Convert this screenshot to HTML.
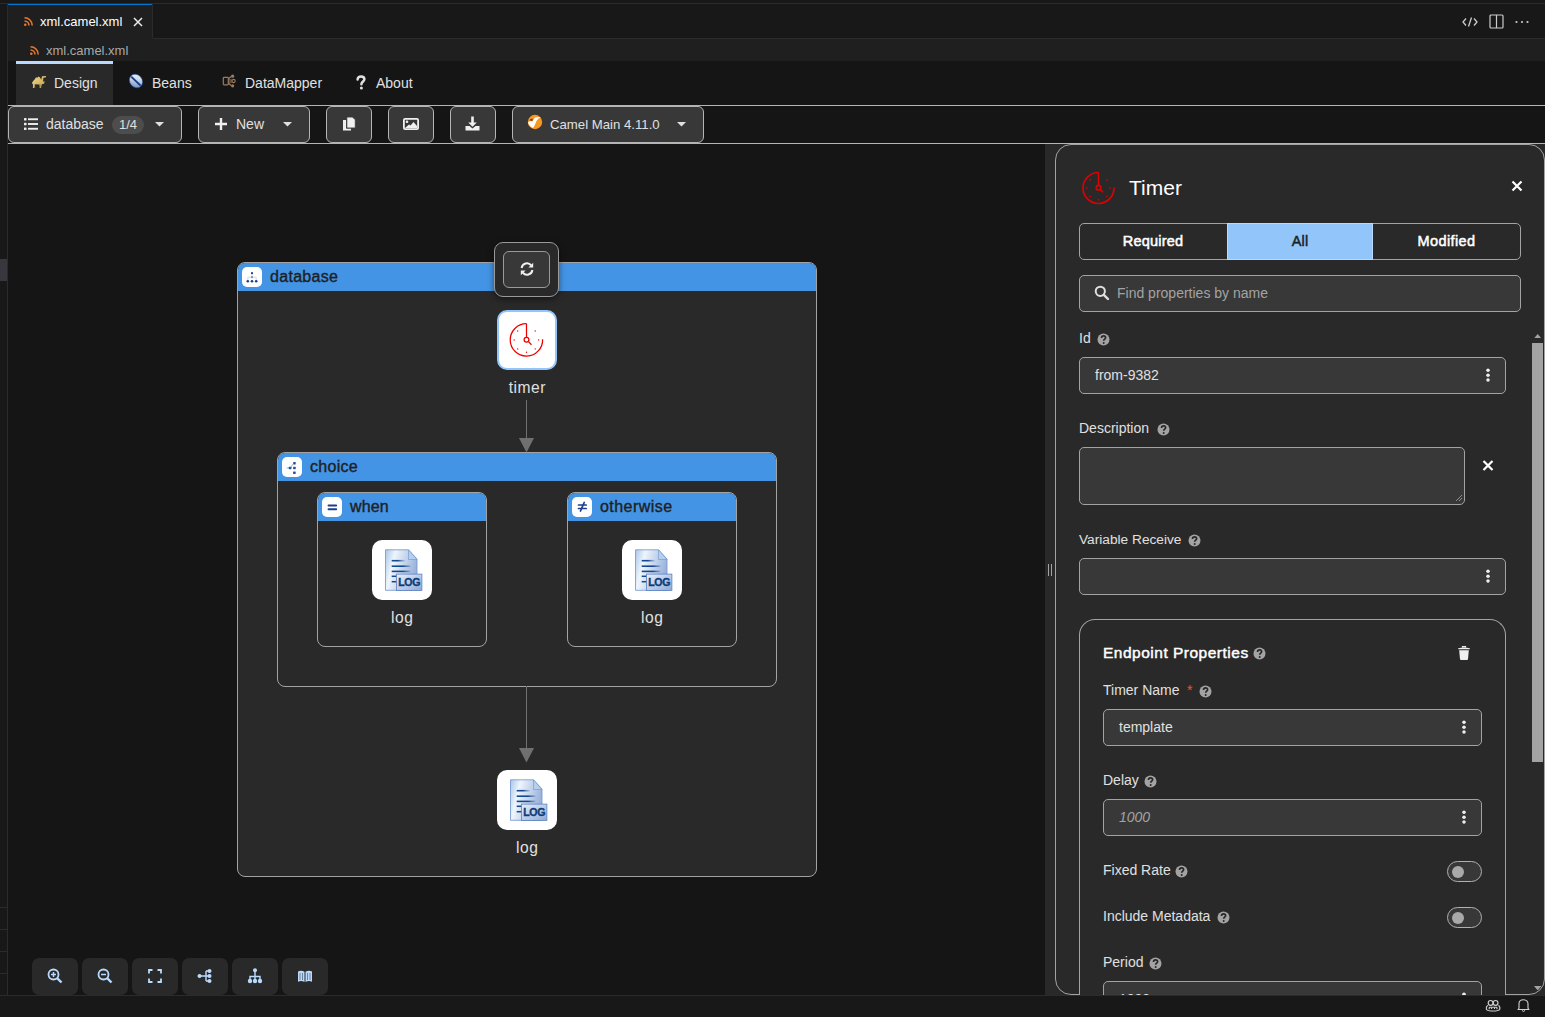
<!DOCTYPE html>
<html><head><meta charset="utf-8"><style>
html,body{margin:0;padding:0;width:1545px;height:1017px;overflow:hidden;background:#181818;font-family:"Liberation Sans", sans-serif;}
body>div,body>svg{position:absolute;}
</style></head><body>
<div style="left:0px;top:0px;width:1545px;height:38px;background:#181818;"></div><div style="left:0px;top:3px;width:1545px;height:1px;background:#2b2b2b;"></div><div style="left:8px;top:4px;width:144px;height:35px;background:#1f1f1f;"></div><div style="left:8px;top:4px;width:144px;height:1px;background:#0078d4;"></div><div style="left:152px;top:4px;width:1px;height:35px;background:#2b2b2b;"></div><div style="left:153px;top:38px;width:1392px;height:1px;background:#2b2b2b;"></div><div style="left:8px;top:39px;width:1537px;height:22px;background:#1f1f1f;"></div><div style="left:8px;top:38px;width:145px;height:1px;background:#1f1f1f;"></div><div style="left:0px;top:4px;width:7px;height:991px;background:#181818;"></div><div style="left:7px;top:4px;width:1px;height:991px;background:#2b2b2b;"></div><div style="left:0px;top:259px;width:7px;height:22px;background:#37373d;"></div><div style="left:0px;top:907px;width:7px;height:1px;background:#2b2b2b;"></div><div style="left:0px;top:929px;width:7px;height:1px;background:#2b2b2b;"></div><div style="left:0px;top:951px;width:7px;height:1px;background:#2b2b2b;"></div><div style="left:0px;top:973px;width:7px;height:1px;background:#2b2b2b;"></div><svg style="left:24px;top:17px;" width="9" height="9" viewBox="0 0 9 9"><circle cx="1.3" cy="7.7" r="1.3" fill="#e37933"/><path d="M0.5 4 A4.5 4.5 0 0 1 5 8.5" stroke="#e37933" stroke-width="1.6" fill="none"/><path d="M0.5 0.8 A7.7 7.7 0 0 1 8.2 8.5" stroke="#e37933" stroke-width="1.6" fill="none"/></svg><div style="top:15.00px;font-size:13px;line-height:13px;color:#ffffff;font-weight:400;font-style:normal;white-space:nowrap;left:40px;">xml.camel.xml</div><svg style="left:133px;top:17px;" width="10" height="10" viewBox="0 0 10 10"><path d="M1 1L9 9M9 1L1 9" stroke="#ececec" stroke-width="1.5"/></svg><svg style="left:30px;top:46px;" width="9" height="9" viewBox="0 0 9 9"><circle cx="1.3" cy="7.7" r="1.3" fill="#e37933"/><path d="M0.5 4 A4.5 4.5 0 0 1 5 8.5" stroke="#e37933" stroke-width="1.6" fill="none"/><path d="M0.5 0.8 A7.7 7.7 0 0 1 8.2 8.5" stroke="#e37933" stroke-width="1.6" fill="none"/></svg><div style="top:44.00px;font-size:13px;line-height:13px;color:#a9a9a9;font-weight:400;font-style:normal;white-space:nowrap;left:46px;">xml.camel.xml</div><svg style="left:1462px;top:17px;" width="16" height="10" viewBox="0 0 16 10"><path d="M4 1.5L1 5L4 8.5M12 1.5L15 5L12 8.5M9.5 0.5L6.5 9.5" stroke="#cccccc" stroke-width="1.3" fill="none"/></svg><svg style="left:1489px;top:14px;" width="15" height="15" viewBox="0 0 15 15"><rect x="1" y="1" width="13" height="13" rx="1" stroke="#cccccc" stroke-width="1.2" fill="none"/><path d="M7.5 1V14" stroke="#cccccc" stroke-width="1.2"/></svg><svg style="left:1515px;top:20px;" width="14" height="4" viewBox="0 0 14 4"><circle cx="1.5" cy="2" r="1.1" fill="#cccccc"/><circle cx="7" cy="2" r="1.1" fill="#cccccc"/><circle cx="12.5" cy="2" r="1.1" fill="#cccccc"/></svg><div style="left:8px;top:61px;width:1537px;height:934px;background:#151515;"></div><div style="left:16px;top:61px;width:97px;height:3px;background:#b9dafc;"></div><div style="left:16px;top:64px;width:97px;height:41px;background:#292929;"></div><div style="top:76.15px;font-size:14px;line-height:14px;color:#e0e0e0;font-weight:400;font-style:normal;white-space:nowrap;left:54px;">Design</div><div style="top:76.15px;font-size:14px;line-height:14px;color:#e0e0e0;font-weight:400;font-style:normal;white-space:nowrap;left:152px;">Beans</div><div style="top:76.15px;font-size:14px;line-height:14px;color:#e0e0e0;font-weight:400;font-style:normal;white-space:nowrap;left:245px;">DataMapper</div><div style="top:76.15px;font-size:14px;line-height:14px;color:#e0e0e0;font-weight:400;font-style:normal;white-space:nowrap;left:376px;">About</div><div style="left:8px;top:105px;width:1537px;height:1px;background:#b4b4b4;"></div><div style="left:8px;top:143px;width:1537px;height:1px;background:#b4b4b4;"></div><svg style="left:28px;top:72px;" width="22" height="20" viewBox="0 0 22 20"><defs><linearGradient id="cg" x1="0" y1="0" x2="1" y2="1"><stop offset="0" stop-color="#f0dc8c"/><stop offset="1" stop-color="#c09a48"/></linearGradient></defs><path d="M3.9 11 L5.2 9 L7 7 L8 5.2 L9.3 5.8 L10.6 4.6 L12 5.5 L13.2 7.8 L14 4.2 L18 3.9 L18 5.3 L15.4 5.8 L15 9.5 L16.8 9.6 L16 11.8 L13.8 12.3 L13 16 L11.6 16 L11.3 12.4 L7.2 12.2 L6.4 16 L4.9 16 L5 12.4 Z" fill="url(#cg)"/><path d="M6.8 12.5 L7.6 15.5 M12 12.5 L11.7 15.8" stroke="#5a4520" stroke-width="0.7"/></svg><svg style="left:128px;top:73px;" width="16" height="16" viewBox="0 0 16 16"><defs><linearGradient id="bg1" x1="0" y1="0" x2="1" y2="1"><stop offset="0" stop-color="#ffffff"/><stop offset="0.45" stop-color="#c5d3e8"/><stop offset="1" stop-color="#5f7fc0"/></linearGradient></defs><ellipse cx="8" cy="8" rx="7.2" ry="6.2" transform="rotate(50 8 8)" fill="url(#bg1)" stroke="#2a4f9a" stroke-width="0.6"/><path d="M3.2 3.6 L12.6 12.6" stroke="#163a85" stroke-width="1.9"/></svg><svg style="left:222px;top:74px;" width="14" height="14" viewBox="0 0 14 14"><rect x="1.3" y="3.3" width="5" height="7.5" rx="0.8" stroke="#9c7b5f" stroke-width="1.2" fill="none"/><path d="M6.3 6 L10 6 M6.3 8 L10 8 M6.5 5 L9 2.5 M6.5 9 L9 11.5" stroke="#9c7b5f" stroke-width="1.1"/><circle cx="10.6" cy="2.2" r="1.6" fill="#9c7b5f"/><circle cx="11.6" cy="7" r="1.6" stroke="#9c7b5f" stroke-width="1.1" fill="none"/><circle cx="10.6" cy="11.8" r="1.6" fill="#9c7b5f"/></svg><svg style="left:355px;top:75px;" width="12" height="15" viewBox="0 0 12 15"><path d="M2.6 4.6C2.6 2.5 4.1 1.4 6 1.4C8 1.4 9.4 2.6 9.4 4.3C9.4 6.4 6.4 6.6 6.4 9.2" stroke="#e0e0e0" stroke-width="2.5" fill="none" stroke-linecap="round"/><circle cx="6.4" cy="13" r="1.5" fill="#e0e0e0"/></svg><div style="left:8px;top:106px;width:174px;height:37px;background:#383838;border:1px solid #b4b4b4;box-sizing:border-box;border-radius:6px;"></div><div style="left:198px;top:106px;width:112px;height:37px;background:#383838;border:1px solid #b4b4b4;box-sizing:border-box;border-radius:6px;"></div><div style="left:326px;top:106px;width:46px;height:37px;background:#383838;border:1px solid #b4b4b4;box-sizing:border-box;border-radius:6px;"></div><div style="left:388px;top:106px;width:46px;height:37px;background:#383838;border:1px solid #b4b4b4;box-sizing:border-box;border-radius:6px;"></div><div style="left:450px;top:106px;width:46px;height:37px;background:#383838;border:1px solid #b4b4b4;box-sizing:border-box;border-radius:6px;"></div><div style="left:512px;top:106px;width:192px;height:37px;background:#383838;border:1px solid #b4b4b4;box-sizing:border-box;border-radius:6px;"></div><svg style="left:24px;top:118px;" width="14" height="12" viewBox="0 0 14 12"><rect x="0" y="0" width="2.5" height="2.5" rx="0.6" fill="#f0f0f0"/><rect x="0" y="4.75" width="2.5" height="2.5" rx="0.6" fill="#f0f0f0"/><rect x="0" y="9.5" width="2.5" height="2.5" rx="0.6" fill="#f0f0f0"/><rect x="4" y="0.3" width="10" height="1.9" fill="#f0f0f0"/><rect x="4" y="5.05" width="10" height="1.9" fill="#f0f0f0"/><rect x="4" y="9.8" width="10" height="1.9" fill="#f0f0f0"/></svg><div style="top:117.15px;font-size:14px;line-height:14px;color:#e0e0e0;font-weight:400;font-style:normal;white-space:nowrap;left:46px;">database</div><div style="left:112px;top:116px;width:32px;height:18px;background:#4d4d4d;border-radius:9px;"></div><div style="top:118.00px;font-size:13px;line-height:13px;color:#e0e0e0;font-weight:400;font-style:normal;white-space:nowrap;left:-372px;width:1000px;text-align:center;">1/4</div><svg style="left:154.5px;top:122.2px;" width="9" height="5" viewBox="0 0 9 5"><path d="M0 0 L9 0 L4.5 4.6 Z" fill="#e0e0e0"/></svg><svg style="left:215px;top:118px;" width="12" height="12" viewBox="0 0 12 12"><path d="M6 0V12M0 6H12" stroke="#f0f0f0" stroke-width="2.4"/></svg><div style="top:117.15px;font-size:14px;line-height:14px;color:#e0e0e0;font-weight:400;font-style:normal;white-space:nowrap;left:236px;">New</div><svg style="left:282.5px;top:122.2px;" width="9" height="5" viewBox="0 0 9 5"><path d="M0 0 L9 0 L4.5 4.6 Z" fill="#e0e0e0"/></svg><svg style="left:342px;top:116px;" width="14" height="15" viewBox="0 0 14 15"><path d="M1 4 H4 V12.5 H9 V14.5 H1 Z" fill="#f0f0f0"/><path d="M4.8 1 H10.5 L13.3 3.8 V12 H4.8 Z" fill="#f0f0f0" stroke="#383838" stroke-width="0.9"/></svg><svg style="left:403px;top:118px;" width="16" height="12" viewBox="0 0 16 12"><rect x="0.9" y="0.9" width="14.2" height="10.2" rx="1.2" stroke="#f0f0f0" stroke-width="1.8" fill="none"/><circle cx="4" cy="3.8" r="1.3" fill="#f0f0f0"/><path d="M2 10 L6 6.5 L7.5 7.5 L10.5 4 L14 8 L14 10 Z" fill="#f0f0f0"/></svg><svg style="left:465px;top:116px;" width="15" height="15" viewBox="0 0 15 15"><path d="M6.2 0.5 H8.8 V6.5 H11.8 L7.5 10.8 L3.2 6.5 H6.2 Z" fill="#f0f0f0"/><path d="M0.5 10 H4.5 L7.5 12.5 L10.5 10 H14.5 V14.5 H0.5 Z" fill="#f0f0f0"/></svg><svg style="left:527px;top:114px;" width="16" height="16" viewBox="0 0 16 16"><circle cx="8" cy="8" r="7.2" fill="#f69923"/><path d="M1 8.5 C2.5 7 4 6.5 5.5 7.5 C6.5 5.5 7.5 3.5 9 3.3 L14 3 C12 4 10.5 5 9.5 7 C8.5 9.5 7.5 12 6 14 C4 13 2 11.5 1 8.5 Z" fill="#ffffff"/><path d="M2.5 6.5 C3.5 4.8 4.8 4.5 5.8 5.2 L5.2 7 C4 6.5 3.3 6.5 2.5 6.5Z" fill="#6b3a05"/></svg><div style="top:117.83px;font-size:13.2px;line-height:13.2px;color:#e0e0e0;font-weight:400;font-style:normal;white-space:nowrap;left:550px;">Camel Main 4.11.0</div><svg style="left:676.5px;top:122.2px;" width="9" height="5" viewBox="0 0 9 5"><path d="M0 0 L9 0 L4.5 4.6 Z" fill="#e0e0e0"/></svg><div style="left:237px;top:262px;width:580px;height:615px;background:#292929;border:1px solid #a3a3a3;box-sizing:border-box;border-radius:8px;"></div><div style="left:238px;top:263px;width:578px;height:28px;background:#4394e5;border-radius:7px 7px 0 0;"></div><div style="left:242px;top:267px;width:20px;height:20px;background:#ffffff;border-radius:5px;"></div><svg style="left:242px;top:267px;" width="20" height="20" viewBox="0 0 20 20"><g fill="#1c3f8a"><circle cx="10" cy="6.2" r="1.1"/><circle cx="10" cy="10.2" r="1.1"/><circle cx="5.8" cy="14.2" r="1.3"/><circle cx="10" cy="14.2" r="1.3"/><circle cx="14.2" cy="14.2" r="1.3"/></g><path d="M10 7V10.2M5.8 13V10.2H14.2V13" stroke="#c7d0e0" stroke-width="0.8" fill="none"/></svg><div style="top:268.66px;font-size:16px;line-height:16px;color:#1f1f1f;font-weight:400;font-style:normal;white-space:nowrap;letter-spacing:0.3px;left:270px;-webkit-text-stroke:0.4px #1f1f1f;">database</div><div style="left:277px;top:452px;width:500px;height:235px;background:#292929;border:1px solid #a3a3a3;box-sizing:border-box;border-radius:8px;"></div><div style="left:278px;top:453px;width:498px;height:28px;background:#4394e5;border-radius:7px 7px 0 0;"></div><div style="left:282px;top:457px;width:20px;height:20px;background:#ffffff;border-radius:5px;"></div><svg style="left:282px;top:457px;" width="20" height="20" viewBox="0 0 20 20"><g fill="#2a4f93"><rect x="11.1" y="5" width="2.6" height="2.4" rx="0.4"/><rect x="11.1" y="9.8" width="2.6" height="2.4" rx="0.4"/><rect x="11.1" y="14.6" width="2.6" height="2.4" rx="0.4"/><rect x="6.8" y="9.8" width="2.6" height="2.4" rx="0.4"/></g><path d="M4.5 11H7M8.5 10.5L11.5 6.5" stroke="#7d8fb5" stroke-width="0.7"/></svg><div style="top:458.66px;font-size:16px;line-height:16px;color:#1f1f1f;font-weight:400;font-style:normal;white-space:nowrap;letter-spacing:0.28px;left:310px;-webkit-text-stroke:0.4px #1f1f1f;">choice</div><div style="left:317px;top:492px;width:170px;height:155px;background:#292929;border:1px solid #a3a3a3;box-sizing:border-box;border-radius:8px;"></div><div style="left:318px;top:493px;width:168px;height:28px;background:#4394e5;border-radius:7px 7px 0 0;"></div><div style="left:322px;top:497px;width:20px;height:20px;background:#ffffff;border-radius:5px;"></div><svg style="left:322px;top:497px;" width="20" height="20" viewBox="0 0 20 20"><path d="M6.5 8.5H14.2M6.5 12.2H14.2" stroke="#1c3f8a" stroke-width="1.9" stroke-linecap="round"/></svg><div style="top:498.66px;font-size:16px;line-height:16px;color:#1f1f1f;font-weight:400;font-style:normal;white-space:nowrap;letter-spacing:0.1px;left:350px;-webkit-text-stroke:0.4px #1f1f1f;">when</div><div style="left:567px;top:492px;width:170px;height:155px;background:#292929;border:1px solid #a3a3a3;box-sizing:border-box;border-radius:8px;"></div><div style="left:568px;top:493px;width:168px;height:28px;background:#4394e5;border-radius:7px 7px 0 0;"></div><div style="left:572px;top:497px;width:20px;height:20px;background:#ffffff;border-radius:5px;"></div><svg style="left:572px;top:497px;" width="20" height="20" viewBox="0 0 20 20"><path d="M6.5 8H14.2M6.5 11.5H14.2M12.2 5.5L8.5 14" stroke="#1c3f8a" stroke-width="1.7" stroke-linecap="round"/></svg><div style="top:498.66px;font-size:16px;line-height:16px;color:#1f1f1f;font-weight:400;font-style:normal;white-space:nowrap;letter-spacing:0.45px;left:600px;-webkit-text-stroke:0.4px #1f1f1f;">otherwise</div><div style="left:497px;top:310px;width:60px;height:60px;background:#ffffff;border:2px solid #92c5f9;box-sizing:border-box;border-radius:10px;"></div><svg style="left:497px;top:310px;" width="60" height="60" viewBox="0 0 60 60"><g stroke="#ee0000" fill="none" stroke-width="1.25"><path d="M29.5 13.7 A16.2 16.2 0 1 0 45.6 29.2"/><path d="M29.5 13.7V27.3"/><circle cx="29.5" cy="29.7" r="2.4"/><path d="M31.2 31.4L34.5 34.8"/></g><g fill="#ee0000"><circle cx="20.7" cy="21" r="0.7"/><circle cx="38.2" cy="21" r="0.7"/><circle cx="17.2" cy="29.9" r="0.7"/><circle cx="41.6" cy="29.9" r="0.7"/><circle cx="20.7" cy="38.9" r="0.7"/><circle cx="38.2" cy="38.9" r="0.7"/><circle cx="29.5" cy="42.2" r="0.7"/></g></svg><div style="top:379.59px;font-size:15.6px;line-height:15.6px;color:#e0e0e0;font-weight:400;font-style:normal;white-space:nowrap;letter-spacing:0.5px;left:27.25px;width:1000px;text-align:center;">timer</div><div style="left:372px;top:540px;width:60px;height:60px;background:#ffffff;border-radius:10px;"></div><svg style="left:372px;top:540px;" width="60" height="60" viewBox="0 0 60 60"><defs><linearGradient id="lg1" x1="0" y1="0" x2="1" y2="0.3"><stop offset="0" stop-color="#a9c6ea"/><stop offset="0.3" stop-color="#eef5fc"/><stop offset="1" stop-color="#9bb4dc"/></linearGradient><linearGradient id="lg2" x1="0" y1="0" x2="1" y2="1"><stop offset="0" stop-color="#e8f1fb"/><stop offset="1" stop-color="#8fa9d6"/></linearGradient></defs><path d="M13.5 9.8H36.5L45 19V50.3H13.5Z" fill="url(#lg1)" stroke="#6f93cf" stroke-width="0.8"/><path d="M36.5 9.8V19.5H45Z" fill="#b7cfee" stroke="#6f93cf" stroke-width="0.6"/><defs><linearGradient id="lf" gradientUnits="userSpaceOnUse" x1="19" y1="0" x2="39" y2="0"><stop offset="0" stop-color="#15488f"/><stop offset="0.6" stop-color="#15488f"/><stop offset="1" stop-color="#15488f" stop-opacity="0.15"/></linearGradient></defs><linearGradient id="lf1" gradientUnits="userSpaceOnUse" x1="19" y1="0" x2="33" y2="0"><stop offset="0" stop-color="#15488f"/><stop offset="0.5" stop-color="#15488f"/><stop offset="1" stop-color="#15488f" stop-opacity="0.1"/></linearGradient><path d="M19.7 20.7H33" stroke="url(#lf1)" stroke-width="1.6"/><g stroke="url(#lf)" stroke-width="1.6"><path d="M19.7 26.2H38.5"/><path d="M19.7 31.4H38.5"/></g><g stroke="#15488f" stroke-width="1.5"><path d="M19.7 36.3H25"/><path d="M19.7 41.7H25"/></g><rect x="24.4" y="34.1" width="25.5" height="16.4" fill="url(#lg2)" stroke="#5b80c2" stroke-width="0.8"/><text x="37.2" y="46.2" text-anchor="middle" font-family="Liberation Sans" font-weight="700" font-size="10.6" fill="#0d3c7a" stroke="#0d3c7a" stroke-width="0.35" letter-spacing="-0.3">LOG</text></svg><div style="top:609.59px;font-size:15.6px;line-height:15.6px;color:#e0e0e0;font-weight:400;font-style:normal;white-space:nowrap;letter-spacing:0.5px;left:-97.75px;width:1000px;text-align:center;">log</div><div style="left:622px;top:540px;width:60px;height:60px;background:#ffffff;border-radius:10px;"></div><svg style="left:622px;top:540px;" width="60" height="60" viewBox="0 0 60 60"><defs><linearGradient id="lg1" x1="0" y1="0" x2="1" y2="0.3"><stop offset="0" stop-color="#a9c6ea"/><stop offset="0.3" stop-color="#eef5fc"/><stop offset="1" stop-color="#9bb4dc"/></linearGradient><linearGradient id="lg2" x1="0" y1="0" x2="1" y2="1"><stop offset="0" stop-color="#e8f1fb"/><stop offset="1" stop-color="#8fa9d6"/></linearGradient></defs><path d="M13.5 9.8H36.5L45 19V50.3H13.5Z" fill="url(#lg1)" stroke="#6f93cf" stroke-width="0.8"/><path d="M36.5 9.8V19.5H45Z" fill="#b7cfee" stroke="#6f93cf" stroke-width="0.6"/><defs><linearGradient id="lf" gradientUnits="userSpaceOnUse" x1="19" y1="0" x2="39" y2="0"><stop offset="0" stop-color="#15488f"/><stop offset="0.6" stop-color="#15488f"/><stop offset="1" stop-color="#15488f" stop-opacity="0.15"/></linearGradient></defs><linearGradient id="lf1" gradientUnits="userSpaceOnUse" x1="19" y1="0" x2="33" y2="0"><stop offset="0" stop-color="#15488f"/><stop offset="0.5" stop-color="#15488f"/><stop offset="1" stop-color="#15488f" stop-opacity="0.1"/></linearGradient><path d="M19.7 20.7H33" stroke="url(#lf1)" stroke-width="1.6"/><g stroke="url(#lf)" stroke-width="1.6"><path d="M19.7 26.2H38.5"/><path d="M19.7 31.4H38.5"/></g><g stroke="#15488f" stroke-width="1.5"><path d="M19.7 36.3H25"/><path d="M19.7 41.7H25"/></g><rect x="24.4" y="34.1" width="25.5" height="16.4" fill="url(#lg2)" stroke="#5b80c2" stroke-width="0.8"/><text x="37.2" y="46.2" text-anchor="middle" font-family="Liberation Sans" font-weight="700" font-size="10.6" fill="#0d3c7a" stroke="#0d3c7a" stroke-width="0.35" letter-spacing="-0.3">LOG</text></svg><div style="top:609.59px;font-size:15.6px;line-height:15.6px;color:#e0e0e0;font-weight:400;font-style:normal;white-space:nowrap;letter-spacing:0.5px;left:152.25px;width:1000px;text-align:center;">log</div><div style="left:497px;top:770px;width:60px;height:60px;background:#ffffff;border-radius:10px;"></div><svg style="left:497px;top:770px;" width="60" height="60" viewBox="0 0 60 60"><defs><linearGradient id="lg1" x1="0" y1="0" x2="1" y2="0.3"><stop offset="0" stop-color="#a9c6ea"/><stop offset="0.3" stop-color="#eef5fc"/><stop offset="1" stop-color="#9bb4dc"/></linearGradient><linearGradient id="lg2" x1="0" y1="0" x2="1" y2="1"><stop offset="0" stop-color="#e8f1fb"/><stop offset="1" stop-color="#8fa9d6"/></linearGradient></defs><path d="M13.5 9.8H36.5L45 19V50.3H13.5Z" fill="url(#lg1)" stroke="#6f93cf" stroke-width="0.8"/><path d="M36.5 9.8V19.5H45Z" fill="#b7cfee" stroke="#6f93cf" stroke-width="0.6"/><defs><linearGradient id="lf" gradientUnits="userSpaceOnUse" x1="19" y1="0" x2="39" y2="0"><stop offset="0" stop-color="#15488f"/><stop offset="0.6" stop-color="#15488f"/><stop offset="1" stop-color="#15488f" stop-opacity="0.15"/></linearGradient></defs><linearGradient id="lf1" gradientUnits="userSpaceOnUse" x1="19" y1="0" x2="33" y2="0"><stop offset="0" stop-color="#15488f"/><stop offset="0.5" stop-color="#15488f"/><stop offset="1" stop-color="#15488f" stop-opacity="0.1"/></linearGradient><path d="M19.7 20.7H33" stroke="url(#lf1)" stroke-width="1.6"/><g stroke="url(#lf)" stroke-width="1.6"><path d="M19.7 26.2H38.5"/><path d="M19.7 31.4H38.5"/></g><g stroke="#15488f" stroke-width="1.5"><path d="M19.7 36.3H25"/><path d="M19.7 41.7H25"/></g><rect x="24.4" y="34.1" width="25.5" height="16.4" fill="url(#lg2)" stroke="#5b80c2" stroke-width="0.8"/><text x="37.2" y="46.2" text-anchor="middle" font-family="Liberation Sans" font-weight="700" font-size="10.6" fill="#0d3c7a" stroke="#0d3c7a" stroke-width="0.35" letter-spacing="-0.3">LOG</text></svg><div style="top:839.59px;font-size:15.6px;line-height:15.6px;color:#e0e0e0;font-weight:400;font-style:normal;white-space:nowrap;letter-spacing:0.5px;left:27.25px;width:1000px;text-align:center;">log</div><div style="left:526px;top:400px;width:1px;height:39px;background:#707070;"></div><svg style="left:519px;top:437.5px;" width="15" height="15" viewBox="0 0 15 15"><path d="M0 0H15L7.5 14.5Z" fill="#707070"/></svg><div style="left:526px;top:686px;width:1px;height:63px;background:#707070;"></div><svg style="left:519px;top:747.5px;" width="15" height="15" viewBox="0 0 15 15"><path d="M0 0H15L7.5 14.5Z" fill="#707070"/></svg><div style="left:494px;top:242px;width:65px;height:55px;background:#292929;border:1px solid #9a9a9a;box-sizing:border-box;border-radius:9px;box-shadow:0 2px 6px rgba(0,0,0,0.5);"></div><div style="left:503px;top:251px;width:47px;height:37px;background:#383838;border:1px solid #9a9a9a;box-sizing:border-box;border-radius:6px;"></div><svg style="left:519.5px;top:262px;" width="14" height="14" viewBox="0 0 14 14"><path d="M1.6 6A5.4 5.4 0 0 1 11.2 3.4" stroke="#f0f0f0" stroke-width="2" fill="none"/><path d="M13.2 0.8V5.6H8.4Z" fill="#f0f0f0"/><path d="M12.4 8A5.4 5.4 0 0 1 2.8 10.6" stroke="#f0f0f0" stroke-width="2" fill="none"/><path d="M0.8 13.2V8.4H5.6Z" fill="#f0f0f0"/></svg><div style="left:32px;top:958px;width:46px;height:37px;background:#292929;border-radius:7px;"></div><div style="left:82px;top:958px;width:46px;height:37px;background:#292929;border-radius:7px;"></div><div style="left:132px;top:958px;width:46px;height:37px;background:#292929;border-radius:7px;"></div><div style="left:182px;top:958px;width:46px;height:37px;background:#292929;border-radius:7px;"></div><div style="left:232px;top:958px;width:46px;height:37px;background:#292929;border-radius:7px;"></div><div style="left:282px;top:958px;width:46px;height:37px;background:#292929;border-radius:7px;"></div><svg style="left:47px;top:968px;" width="16" height="16" viewBox="0 0 16 16"><circle cx="6.5" cy="6.5" r="5" stroke="#b9dafc" stroke-width="1.8" fill="none"/><path d="M10 10L14.5 14.5" stroke="#b9dafc" stroke-width="2.4"/><path d="M6.5 4V9M4 6.5H9" stroke="#b9dafc" stroke-width="1.5"/></svg><svg style="left:97px;top:968px;" width="16" height="16" viewBox="0 0 16 16"><circle cx="6.5" cy="6.5" r="5" stroke="#b9dafc" stroke-width="1.8" fill="none"/><path d="M10 10L14.5 14.5" stroke="#b9dafc" stroke-width="2.4"/><path d="M4 6.5H9" stroke="#b9dafc" stroke-width="1.5"/></svg><svg style="left:148px;top:969px;" width="14" height="14" viewBox="0 0 14 14"><path d="M1 4.5V1H4.5M9.5 1H13V4.5M13 9.5V13H9.5M4.5 13H1V9.5" stroke="#b9dafc" stroke-width="1.8" fill="none"/></svg><svg style="left:197px;top:968px;" width="16" height="16" viewBox="0 0 16 16"><circle cx="2.5" cy="8" r="2" fill="#b9dafc"/><circle cx="12.5" cy="3" r="2" fill="#b9dafc"/><circle cx="12.5" cy="8" r="2" fill="#b9dafc"/><circle cx="12.5" cy="13" r="2" fill="#b9dafc"/><path d="M2.5 8H12.5M9 3V13M9 3H12M9 13H12" stroke="#b9dafc" stroke-width="1.4" fill="none"/></svg><svg style="left:247px;top:968px;" width="16" height="16" viewBox="0 0 16 16"><circle cx="8" cy="2.2" r="2" fill="#b9dafc"/><circle cx="3" cy="13" r="2.2" fill="#b9dafc"/><circle cx="8" cy="13" r="2.2" fill="#b9dafc"/><circle cx="13" cy="13" r="2.2" fill="#b9dafc"/><path d="M8 2.2V13M3 13V8.5H13V13" stroke="#b9dafc" stroke-width="1.4" fill="none"/></svg><svg style="left:297px;top:969px;" width="16" height="14" viewBox="0 0 16 14"><path d="M1 2.5C3 1.5 5.5 1.5 7.5 2.8V13C5.5 11.8 3 11.8 1 12.8Z M8.5 2.8C10.5 1.5 13 1.5 15 2.5V12.8C13 11.8 10.5 11.8 8.5 13Z" fill="#b9dafc"/><path d="M3 4V11M5.5 4V11M10.5 4V11M13 4V11" stroke="#292929" stroke-width="0.5"/></svg><div style="left:1045px;top:144px;width:500px;height:851px;background:#292929;"></div><div style="left:1048px;top:564px;width:1px;height:12px;background:#a3a3a3;"></div><div style="left:1051px;top:564px;width:1px;height:12px;background:#a3a3a3;"></div><div style="left:1055px;top:144px;width:490px;height:851px;border:1px solid #a3a3a3;border-radius:16px;box-sizing:border-box;background:#292929;"></div><svg style="left:1081px;top:170px;" width="36" height="36" viewBox="0 0 36 36"><g stroke="#e00000" fill="none" stroke-width="1.6"><path d="M17.5 2.5 A15.5 15.5 0 1 0 33 17.5"/><path d="M17.5 2.5V15.3"/><circle cx="17.5" cy="17.7" r="2.3"/><path d="M19.2 19.4L22 22.2"/></g><g fill="#e00000"><circle cx="9.2" cy="9.9" r="0.8"/><circle cx="25.8" cy="9.9" r="0.8"/><circle cx="5.8" cy="18" r="0.8"/><circle cx="29.2" cy="18" r="0.8"/><circle cx="9.2" cy="26.5" r="0.8"/><circle cx="25.8" cy="26.5" r="0.8"/><circle cx="17.5" cy="29.8" r="0.8"/></g></svg><div style="top:177.22px;font-size:21px;line-height:21px;color:#ffffff;font-weight:400;font-style:normal;white-space:nowrap;left:1129px;">Timer</div><svg style="left:1511px;top:180px;" width="12" height="12" viewBox="0 0 12 12"><path d="M1.5 1.5L10.5 10.5M10.5 1.5L1.5 10.5" stroke="#ffffff" stroke-width="2.2"/></svg><div style="left:1079px;top:223px;width:442px;height:37px;border:1px solid #a3a3a3;box-sizing:border-box;border-radius:5px;"></div><div style="left:1227px;top:223px;width:146px;height:37px;background:#92c5f9;border:1px solid #b9dafc;box-sizing:border-box;"></div><div style="top:233.73px;font-size:14.5px;line-height:14.5px;color:#ffffff;font-weight:400;font-style:normal;white-space:nowrap;letter-spacing:0.2px;left:653px;width:1000px;text-align:center;-webkit-text-stroke:0.5px #ffffff;">Required</div><div style="top:233.73px;font-size:14.5px;line-height:14.5px;color:#1f1f1f;font-weight:400;font-style:normal;white-space:nowrap;letter-spacing:0.2px;left:800px;width:1000px;text-align:center;-webkit-text-stroke:0.5px #1f1f1f;">All</div><div style="top:233.73px;font-size:14.5px;line-height:14.5px;color:#ffffff;font-weight:400;font-style:normal;white-space:nowrap;letter-spacing:0.4px;left:946.5px;width:1000px;text-align:center;-webkit-text-stroke:0.5px #ffffff;">Modified</div><div style="left:1079px;top:275px;width:442px;height:37px;background:#383838;border:1px solid #a3a3a3;box-sizing:border-box;border-radius:5px;"></div><svg style="left:1094px;top:285px;" width="16" height="16" viewBox="0 0 16 16"><circle cx="6.3" cy="6.3" r="4.6" stroke="#e0e0e0" stroke-width="2" fill="none"/><path d="M9.8 9.8L14 14" stroke="#e0e0e0" stroke-width="2.4" stroke-linecap="round"/></svg><div style="top:286.15px;font-size:14px;line-height:14px;color:#a3a3a3;font-weight:400;font-style:normal;white-space:nowrap;left:1117px;">Find properties by name</div><div style="top:330.65px;font-size:14px;line-height:14px;color:#e0e0e0;font-weight:400;font-style:normal;white-space:nowrap;left:1079px;">Id</div><svg style="left:1097px;top:332.5px;" width="13" height="13" viewBox="0 0 13 13"><circle cx="6.5" cy="6.5" r="6" fill="#a3a3a3"/><path d="M4.5 5C4.5 3.6 5.4 2.9 6.6 2.9C7.8 2.9 8.6 3.6 8.6 4.7C8.6 6 6.7 6.2 6.7 7.7" stroke="#292929" stroke-width="1.7" fill="none"/><circle cx="6.7" cy="9.9" r="1" fill="#292929"/></svg><div style="left:1079px;top:357px;width:427px;height:37px;background:#383838;border:1px solid #a3a3a3;box-sizing:border-box;border-radius:5px;"></div><div style="top:367.65px;font-size:14px;line-height:14px;color:#e0e0e0;font-weight:400;font-style:normal;white-space:nowrap;left:1095px;">from-9382</div><svg style="left:1486px;top:368px;" width="4" height="15" viewBox="0 0 4 15"><circle cx="2" cy="2.3" r="1.75" fill="#f0f0f0"/><circle cx="2" cy="7.2" r="1.75" fill="#f0f0f0"/><circle cx="2" cy="12.1" r="1.75" fill="#f0f0f0"/></svg><div style="top:420.65px;font-size:14px;line-height:14px;color:#e0e0e0;font-weight:400;font-style:normal;white-space:nowrap;left:1079px;">Description</div><svg style="left:1157px;top:422.5px;" width="13" height="13" viewBox="0 0 13 13"><circle cx="6.5" cy="6.5" r="6" fill="#a3a3a3"/><path d="M4.5 5C4.5 3.6 5.4 2.9 6.6 2.9C7.8 2.9 8.6 3.6 8.6 4.7C8.6 6 6.7 6.2 6.7 7.7" stroke="#292929" stroke-width="1.7" fill="none"/><circle cx="6.7" cy="9.9" r="1" fill="#292929"/></svg><div style="left:1079px;top:447px;width:386px;height:58px;background:#383838;border:1px solid #a3a3a3;box-sizing:border-box;border-radius:5px;"></div><svg style="left:1455px;top:494px;" width="8" height="8" viewBox="0 0 8 8"><path d="M7 1L1 7M7 4L4 7" stroke="#a3a3a3" stroke-width="0.8"/></svg><svg style="left:1482px;top:460px;" width="12" height="11" viewBox="0 0 12 11"><path d="M1.5 1L10.5 10M10.5 1L1.5 10" stroke="#ffffff" stroke-width="2.2"/></svg><div style="top:533.40px;font-size:13.7px;line-height:13.7px;color:#e0e0e0;font-weight:400;font-style:normal;white-space:nowrap;left:1079px;">Variable Receive</div><svg style="left:1188px;top:533.5px;" width="13" height="13" viewBox="0 0 13 13"><circle cx="6.5" cy="6.5" r="6" fill="#a3a3a3"/><path d="M4.5 5C4.5 3.6 5.4 2.9 6.6 2.9C7.8 2.9 8.6 3.6 8.6 4.7C8.6 6 6.7 6.2 6.7 7.7" stroke="#292929" stroke-width="1.7" fill="none"/><circle cx="6.7" cy="9.9" r="1" fill="#292929"/></svg><div style="left:1079px;top:558px;width:427px;height:37px;background:#383838;border:1px solid #a3a3a3;box-sizing:border-box;border-radius:5px;"></div><svg style="left:1486px;top:569px;" width="4" height="15" viewBox="0 0 4 15"><circle cx="2" cy="2.3" r="1.75" fill="#f0f0f0"/><circle cx="2" cy="7.2" r="1.75" fill="#f0f0f0"/><circle cx="2" cy="12.1" r="1.75" fill="#f0f0f0"/></svg><div style="left:1079px;top:619px;width:427px;height:376px;border:1px solid #a3a3a3;border-bottom:none;border-radius:16px 16px 0 0;box-sizing:border-box;background:#292929;"></div><div style="top:645.18px;font-size:15.5px;line-height:15.5px;color:#ffffff;font-weight:400;font-style:normal;white-space:nowrap;letter-spacing:0.5px;left:1103px;-webkit-text-stroke:0.45px #ffffff;">Endpoint Properties</div><svg style="left:1253px;top:646.5px;" width="13" height="13" viewBox="0 0 13 13"><circle cx="6.5" cy="6.5" r="6" fill="#a3a3a3"/><path d="M4.5 5C4.5 3.6 5.4 2.9 6.6 2.9C7.8 2.9 8.6 3.6 8.6 4.7C8.6 6 6.7 6.2 6.7 7.7" stroke="#292929" stroke-width="1.7" fill="none"/><circle cx="6.7" cy="9.9" r="1" fill="#292929"/></svg><svg style="left:1457px;top:645px;" width="14" height="16" viewBox="0 0 14 16"><path d="M1.2 3.2Q7 1.8 12.8 3.2V4.2H1.2Z" fill="#f0f0f0"/><path d="M5.5 2.5V1.6H8.5V2.5" stroke="#f0f0f0" stroke-width="1.2" fill="none"/><path d="M2.2 5.2H11.8L11 14.2Q10.8 15 10 15H4Q3.2 15 3 14.2Z" fill="#f0f0f0"/></svg><div style="top:683.15px;font-size:14px;line-height:14px;color:#e0e0e0;font-weight:400;font-style:normal;white-space:nowrap;left:1103px;">Timer Name</div><div style="top:683.15px;font-size:14px;line-height:14px;color:#f0561d;font-weight:400;font-style:normal;white-space:nowrap;left:1187px;">*</div><svg style="left:1199px;top:684.5px;" width="13" height="13" viewBox="0 0 13 13"><circle cx="6.5" cy="6.5" r="6" fill="#a3a3a3"/><path d="M4.5 5C4.5 3.6 5.4 2.9 6.6 2.9C7.8 2.9 8.6 3.6 8.6 4.7C8.6 6 6.7 6.2 6.7 7.7" stroke="#292929" stroke-width="1.7" fill="none"/><circle cx="6.7" cy="9.9" r="1" fill="#292929"/></svg><div style="left:1103px;top:709px;width:379px;height:37px;background:#383838;border:1px solid #a3a3a3;box-sizing:border-box;border-radius:5px;"></div><div style="top:720.15px;font-size:14px;line-height:14px;color:#e0e0e0;font-weight:400;font-style:normal;white-space:nowrap;left:1119px;">template</div><svg style="left:1462px;top:720px;" width="4" height="15" viewBox="0 0 4 15"><circle cx="2" cy="2.3" r="1.75" fill="#f0f0f0"/><circle cx="2" cy="7.2" r="1.75" fill="#f0f0f0"/><circle cx="2" cy="12.1" r="1.75" fill="#f0f0f0"/></svg><div style="top:773.15px;font-size:14px;line-height:14px;color:#e0e0e0;font-weight:400;font-style:normal;white-space:nowrap;left:1103px;">Delay</div><svg style="left:1144px;top:774.5px;" width="13" height="13" viewBox="0 0 13 13"><circle cx="6.5" cy="6.5" r="6" fill="#a3a3a3"/><path d="M4.5 5C4.5 3.6 5.4 2.9 6.6 2.9C7.8 2.9 8.6 3.6 8.6 4.7C8.6 6 6.7 6.2 6.7 7.7" stroke="#292929" stroke-width="1.7" fill="none"/><circle cx="6.7" cy="9.9" r="1" fill="#292929"/></svg><div style="left:1103px;top:799px;width:379px;height:37px;background:#383838;border:1px solid #a3a3a3;box-sizing:border-box;border-radius:5px;"></div><div style="top:810.15px;font-size:14px;line-height:14px;color:#a3a3a3;font-weight:400;font-style:italic;white-space:nowrap;left:1119px;">1000</div><svg style="left:1462px;top:810px;" width="4" height="15" viewBox="0 0 4 15"><circle cx="2" cy="2.3" r="1.75" fill="#f0f0f0"/><circle cx="2" cy="7.2" r="1.75" fill="#f0f0f0"/><circle cx="2" cy="12.1" r="1.75" fill="#f0f0f0"/></svg><div style="top:863.15px;font-size:14px;line-height:14px;color:#e0e0e0;font-weight:400;font-style:normal;white-space:nowrap;left:1103px;">Fixed Rate</div><svg style="left:1175px;top:864.5px;" width="13" height="13" viewBox="0 0 13 13"><circle cx="6.5" cy="6.5" r="6" fill="#a3a3a3"/><path d="M4.5 5C4.5 3.6 5.4 2.9 6.6 2.9C7.8 2.9 8.6 3.6 8.6 4.7C8.6 6 6.7 6.2 6.7 7.7" stroke="#292929" stroke-width="1.7" fill="none"/><circle cx="6.7" cy="9.9" r="1" fill="#292929"/></svg><div style="left:1447px;top:861px;width:35px;height:21px;background:#383838;border:1px solid #b0b0b0;box-sizing:border-box;border-radius:11px;"></div><div style="left:1452px;top:865.5px;width:12px;height:12px;background:#a9a9a9;border-radius:50%;"></div><div style="top:909.15px;font-size:14px;line-height:14px;color:#e0e0e0;font-weight:400;font-style:normal;white-space:nowrap;left:1103px;">Include Metadata</div><svg style="left:1217px;top:910.5px;" width="13" height="13" viewBox="0 0 13 13"><circle cx="6.5" cy="6.5" r="6" fill="#a3a3a3"/><path d="M4.5 5C4.5 3.6 5.4 2.9 6.6 2.9C7.8 2.9 8.6 3.6 8.6 4.7C8.6 6 6.7 6.2 6.7 7.7" stroke="#292929" stroke-width="1.7" fill="none"/><circle cx="6.7" cy="9.9" r="1" fill="#292929"/></svg><div style="left:1447px;top:907px;width:35px;height:21px;background:#383838;border:1px solid #b0b0b0;box-sizing:border-box;border-radius:11px;"></div><div style="left:1452px;top:911.5px;width:12px;height:12px;background:#a9a9a9;border-radius:50%;"></div><div style="top:955.15px;font-size:14px;line-height:14px;color:#e0e0e0;font-weight:400;font-style:normal;white-space:nowrap;left:1103px;">Period</div><svg style="left:1149px;top:956.5px;" width="13" height="13" viewBox="0 0 13 13"><circle cx="6.5" cy="6.5" r="6" fill="#a3a3a3"/><path d="M4.5 5C4.5 3.6 5.4 2.9 6.6 2.9C7.8 2.9 8.6 3.6 8.6 4.7C8.6 6 6.7 6.2 6.7 7.7" stroke="#292929" stroke-width="1.7" fill="none"/><circle cx="6.7" cy="9.9" r="1" fill="#292929"/></svg><div style="left:1103px;top:981px;width:379px;height:37px;background:#383838;border:1px solid #a3a3a3;box-sizing:border-box;border-radius:5px;"></div><div style="top:992.35px;font-size:14px;line-height:14px;color:#e0e0e0;font-weight:400;font-style:normal;white-space:nowrap;left:1119px;">1000</div><svg style="left:1462px;top:992px;" width="4" height="15" viewBox="0 0 4 15"><circle cx="2" cy="2.3" r="1.75" fill="#f0f0f0"/><circle cx="2" cy="7.2" r="1.75" fill="#f0f0f0"/><circle cx="2" cy="12.1" r="1.75" fill="#f0f0f0"/></svg><div style="left:1532px;top:343px;width:11px;height:419px;background:#a3a3a3;"></div><svg style="left:1533.8px;top:333.8px;" width="7.4" height="4.4" viewBox="0 0 7.4 4.4"><path d="M0 4.4L3.7 0L7.4 4.4Z" fill="#a3a3a3"/></svg><svg style="left:1533.8px;top:985.5px;" width="7.4" height="4.4" viewBox="0 0 7.4 4.4"><path d="M0 0L3.7 4.4L7.4 0Z" fill="#a3a3a3"/></svg><div style="left:0px;top:995px;width:1545px;height:22px;background:#181818;"></div><div style="left:0px;top:995px;width:1545px;height:1px;background:#2b2b2b;"></div><svg style="left:1484px;top:999px;" width="18" height="14" viewBox="0 0 18 14"><g stroke="#d0d0d0" stroke-width="1.15" fill="none"><circle cx="6.6" cy="3.9" r="2.4"/><circle cx="11.6" cy="3.9" r="2.4"/><path d="M3.6 6.2L2.4 8.2V10.2C4 12.6 14.2 12.6 15.8 10.2V8.2L14.6 6.2"/><path d="M5.2 8.2V10.2M13 8.2V10.2M5.2 8.2H13"/></g><path d="M7.6 8.6V10M10.5 8.6V10" stroke="#d0d0d0" stroke-width="1.1"/></svg><svg style="left:1517px;top:999px;" width="13" height="13" viewBox="0 0 13 13"><path d="M1.2 10.5H11.8L11 9.2V4.8C11 2.5 9.2 0.8 6.5 0.8C3.8 0.8 2 2.5 2 4.8V9.2Z" stroke="#d0d0d0" stroke-width="1.1" fill="none"/><circle cx="6.5" cy="11.6" r="1" stroke="#d0d0d0" stroke-width="0.9" fill="none"/></svg>
</body></html>
